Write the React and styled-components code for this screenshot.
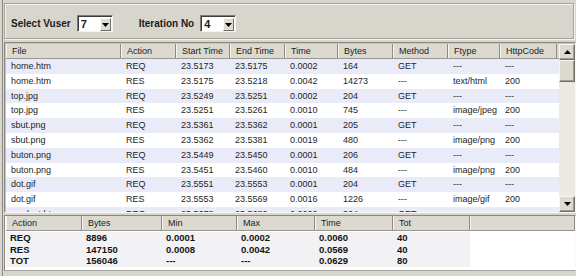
import React from 'react';
import styled, { createGlobalStyle } from 'styled-components';

const GlobalStyle = createGlobalStyle`
  html, body {
    margin: 0;
    padding: 0;
    background: #d8d5cd;
  }
  * {
    box-sizing: border-box;
  }
`;

const upperCols = [
  { title: 'File', width: 115 },
  { title: 'Action', width: 55 },
  { title: 'Start Time', width: 54 },
  { title: 'End Time', width: 55 },
  { title: 'Time', width: 53 },
  { title: 'Bytes', width: 55 },
  { title: 'Method', width: 55 },
  { title: 'Ftype', width: 52 },
  { title: 'HttpCode', width: 57 },
];

const rows = [
  ['home.htm', 'REQ', '23.5173', '23.5175', '0.0002', '164', 'GET', '---', '---'],
  ['home.htm', 'RES', '23.5175', '23.5218', '0.0042', '14273', '---', 'text/html', '200'],
  ['top.jpg', 'REQ', '23.5249', '23.5251', '0.0002', '204', 'GET', '---', '---'],
  ['top.jpg', 'RES', '23.5251', '23.5261', '0.0010', '745', '---', 'image/jpeg', '200'],
  ['sbut.png', 'REQ', '23.5361', '23.5362', '0.0001', '205', 'GET', '---', '---'],
  ['sbut.png', 'RES', '23.5362', '23.5381', '0.0019', '480', '---', 'image/png', '200'],
  ['buton.png', 'REQ', '23.5449', '23.5450', '0.0001', '206', 'GET', '---', '---'],
  ['buton.png', 'RES', '23.5451', '23.5460', '0.0010', '484', '---', 'image/png', '200'],
  ['dot.gif', 'REQ', '23.5551', '23.5553', '0.0001', '204', 'GET', '---', '---'],
  ['dot.gif', 'RES', '23.5553', '23.5569', '0.0016', '1226', '---', 'image/gif', '200'],
  ['product.htm', 'REQ', '25.5678', '25.5680', '0.0002', '364', 'GET', '---', '---'],
];

const lowerCols = [
  { title: 'Action', width: 76 },
  { title: 'Bytes', width: 80 },
  { title: 'Min', width: 75 },
  { title: 'Max', width: 78 },
  { title: 'Time', width: 78 },
  { title: 'Tot', width: 77 },
];

const totals = [
  ['REQ', '8896', '0.0001', '0.0002', '0.0060', '40'],
  ['RES', '147150', '0.0008', '0.0042', '0.0569', '40'],
  ['TOT', '156046', '---', '---', '0.0629', '80'],
];

const upperTemplate = upperCols.map((c) => `${c.width}px`).join(' ');
const lowerTemplate = lowerCols.map((c) => `${c.width}px`).join(' ') + ' 1fr';

const Combo = ({ value }) => (
  <ComboBox>
    <ComboValue>{value}</ComboValue>
    <DropButton>
      <svg width="7" height="4" viewBox="0 0 7 4">
        <path d="M0 0h7L3.5 4z" fill="#000" />
      </svg>
    </DropButton>
  </ComboBox>
);

const App = () => {
  return (
    <>
      <GlobalStyle />
      <Window>
        <TopPanel>
          <Label>Select Vuser</Label>
          <Combo value="7" />
          <Label $gap>Iteration No</Label>
          <Combo value="4" />
        </TopPanel>

        <Grid>
          <GridBody>
            <HeaderRow $cols={upperTemplate}>
              {upperCols.map((c) => (
                <HeaderCell key={c.title}>{c.title}</HeaderCell>
              ))}
            </HeaderRow>
            {rows.map((r, i) => (
              <DataRow key={i} $cols={upperTemplate} $alt={i % 2 === 0}>
                {r.map((v, j) => (
                  <Cell key={j}>{v}</Cell>
                ))}
              </DataRow>
            ))}
          </GridBody>
          <ScrollBar>
            <ScrollButton>
              <svg width="7" height="4" viewBox="0 0 7 4">
                <path d="M0 4h7L3.5 0z" fill="#000" />
              </svg>
            </ScrollButton>
            <Thumb />
            <Track />
            <ScrollButton>
              <svg width="7" height="4" viewBox="0 0 7 4">
                <path d="M0 0h7L3.5 4z" fill="#000" />
              </svg>
            </ScrollButton>
          </ScrollBar>
        </Grid>

        <Summary>
          <HeaderRow $cols={lowerTemplate}>
            {lowerCols.map((c) => (
              <HeaderCell key={c.title}>{c.title}</HeaderCell>
            ))}
            <HeaderCell />
          </HeaderRow>
          <SummaryBody>
            {totals.map((r) => (
              <SummaryRow key={r[0]} $cols={lowerTemplate}>
                {r.map((v, j) => (
                  <BoldCell key={j}>{v}</BoldCell>
                ))}
                <Filler />
              </SummaryRow>
            ))}
          </SummaryBody>
        </Summary>
      </Window>
    </>
  );
};

export default App;

const Window = styled.div`
  width: 574px;
  height: 276px;
  margin-left: 2px;
  border-left: 1px solid #8c8a84;
  padding: 3px 0 5px 1px;
  display: flex;
  flex-direction: column;
  font-family: 'Liberation Sans', Arial, sans-serif;
  font-size: 9px;
  color: #1a1a1a;
  overflow: hidden;
`;

const TopPanel = styled.div`
  height: 36px;
  flex-shrink: 0;
  display: flex;
  align-items: center;
  padding: 5px 0 0 6px;
  border: 1px solid #a6a39c;
  box-shadow: inset 1px 1px 0 #f4f3ef, 1px 1px 0 #f4f3ef;
  margin-right: 2px;
`;

const Label = styled.span`
  font-size: 10px;
  font-weight: bold;
  color: #1c1c1c;
  margin-left: ${(props) => (props.$gap ? '26px' : '0')};
  margin-right: 6px;
`;

const ComboBox = styled.div`
  width: 36px;
  height: 17px;
  display: flex;
  align-items: stretch;
  background: #fff;
  border-top: 1px solid #7c7a74;
  border-left: 1px solid #7c7a74;
  border-right: 1px solid #f4f3ef;
  border-bottom: 1px solid #f4f3ef;
  box-shadow: inset 1px 1px 0 #3c3c3c;
  padding: 2px 1px 1px 2px;
`;

const ComboValue = styled.span`
  flex: 1;
  font-size: 11px;
  font-weight: bold;
  line-height: 13px;
  padding-left: 1px;
`;

const DropButton = styled.div`
  width: 11px;
  height: 13px;
  display: flex;
  align-items: center;
  justify-content: center;
  background: #dedcd5;
  border-top: 1px solid #fbfbf8;
  border-left: 1px solid #fbfbf8;
  border-right: 1px solid #6e6c66;
  border-bottom: 1px solid #6e6c66;
`;

const Grid = styled.div`
  margin-top: 3px;
  height: 171px;
  flex-shrink: 0;
  display: flex;
  border-top: 1px solid #8a8780;
  border-left: 1px solid #8a8780;
  border-right: 1px solid #fbfaf6;
  border-bottom: 1px solid #fbfaf6;
  box-shadow: inset 1px 1px 0 #c8c5be;
  padding: 1px 0 0 1px;
  overflow: hidden;
`;

const GridBody = styled.div`
  flex: 1;
  background: #fff;
  overflow: hidden;
`;

const HeaderRow = styled.div`
  display: grid;
  grid-template-columns: ${(props) => props.$cols};
  height: 15px;
  flex-shrink: 0;
  background: #dcd9d1;
  border-bottom: 1px solid #9a978f;
`;

const HeaderCell = styled.div`
  padding-left: 5px;
  line-height: 14px;
  color: #222;
  white-space: nowrap;
  border-left: 1px solid #f6f5f1;
  border-right: 1px solid #8e8b84;
`;

const DataRow = styled.div`
  display: grid;
  grid-template-columns: ${(props) => props.$cols};
  height: 14.8px;
  background: ${(props) => (props.$alt ? '#e9ecf8' : '#ffffff')};
`;

const Cell = styled.div`
  padding-left: 5px;
  line-height: 14.8px;
  white-space: nowrap;
  overflow: hidden;
  color: #1e1e1e;
`;

const ScrollBar = styled.div`
  width: 16px;
  flex-shrink: 0;
  display: flex;
  flex-direction: column;
  background: #ebe9e3;
`;

const ScrollButton = styled.div`
  height: 16px;
  flex-shrink: 0;
  display: flex;
  align-items: center;
  justify-content: center;
  background: #dcd9d1;
  border-top: 1px solid #f6f5f1;
  border-left: 1px solid #f6f5f1;
  border-right: 1px solid #6e6c66;
  border-bottom: 1px solid #6e6c66;
  box-shadow: inset -1px -1px 0 #a09d96;
`;

const Thumb = styled(ScrollButton)`
  height: 22px;
`;

const Track = styled.div`
  flex: 1;
`;

const Summary = styled.div`
  margin-top: 2px;
  flex: 1;
  display: flex;
  flex-direction: column;
  border-top: 1px solid #8a8780;
  border-left: 1px solid #8a8780;
  border-right: 1px solid #fbfaf6;
  border-bottom: 1px solid #a6a39c;
  padding: 0 0 0 1px;
  background: #fff;
  overflow: hidden;
`;

const SummaryBody = styled.div`
  flex: 1;
  padding-top: 1px;
`;

const SummaryRow = styled.div`
  display: grid;
  grid-template-columns: ${(props) => props.$cols};
  height: 11.5px;
`;

const BoldCell = styled.div`
  padding-left: 4px;
  font-size: 9.5px;
  font-weight: bold;
  line-height: 11.5px;
  color: #141414;
  background: #f2f2f5;
  white-space: nowrap;
`;

const Filler = styled.div`
  background: #fff;
`;
